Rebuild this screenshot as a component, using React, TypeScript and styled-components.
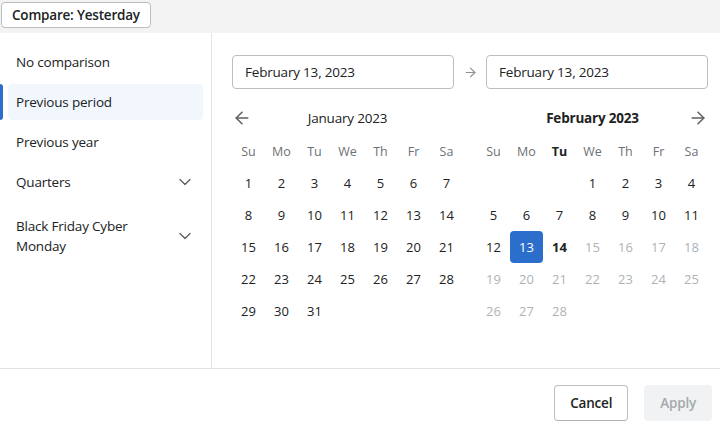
import React from 'react'
import styled, { createGlobalStyle } from 'styled-components'
import { ArrowLeft, ArrowRight, ChevronDown } from 'lucide-react'

const variables = {
    text: '#202223',
    subdued: '#6d7175',
    disabled: '#b0b3b6',
    border: '#babfc3',
    divider: '#e1e3e5',
    blue: '#2c6ecb',
    icon: '#5c5f62'
};

const GlobalStyle = createGlobalStyle`
  body {
    margin: 0;
    background: #fff;
    font-family: "Open Sans", "Noto Sans", sans-serif;
    color: ${variables.text};
  }
`;

const TopBar = styled.div`
  height: 33px;
  background: #f3f3f3;
  padding: 2px 1px 0;
  box-sizing: border-box;
`;
const CompareButton = styled.button`
  height: 26px;
  padding: 0 10px;
  background: #fff;
  border: 1px solid ${variables.border};
  border-radius: 4px;
  font-family: inherit;
  font-size: 13.5px;
  font-weight: 600;
  color: ${variables.text};
  letter-spacing: -0.2px;
`;
const Body = styled.div`
  display: flex;
  height: 335px;
`;
const Sidebar = styled.div`
  width: 212px;
  flex-shrink: 0;
  border-right: 1px solid ${variables.divider};
  padding: 11px 8px 0;
  box-sizing: border-box;
  display: flex;
  flex-direction: column;
  gap: 4px;
`;
const Option = styled.div<{ $active?: boolean; $offset?: number }>`
  position: relative;
  display: flex;
  align-items: center;
  justify-content: space-between;
  padding: 8px 8px;
  margin-top: ${p => p.$offset || 0}px;
  border-radius: 4px;
  font-size: 13.5px;
  line-height: 20px;
  letter-spacing: -0.2px;
  background: ${p => (p.$active ? '#f2f7fe' : 'transparent')};
  &::before {
    content: '';
    display: ${p => (p.$active ? 'block' : 'none')};
    position: absolute;
    left: -8px;
    top: 0;
    bottom: 0;
    width: 3px;
    background: ${variables.blue};
    border-radius: 0 3px 3px 0;
  }
  svg {
    color: ${variables.icon};
    flex-shrink: 0;
  }
`;
const OptionLabel = styled.span`
  max-width: 130px;
`;
const Main = styled.div`
  flex: 1;
  padding: 22px 12px 0 20px;
`;
const InputsRow = styled.div`
  display: flex;
  align-items: center;
`;
const DateInput = styled.div`
  width: 222px;
  height: 34px;
  box-sizing: border-box;
  border: 1px solid ${variables.border};
  border-radius: 4px;
  padding: 0 12px;
  display: flex;
  align-items: center;
  font-size: 13.5px;
  letter-spacing: -0.2px;
`;
const InputArrow = styled.div`
  width: 32px;
  display: flex;
  justify-content: center;
  color: #8c9196;
`;
const Calendars = styled.div`
  display: flex;
  gap: 14px;
  margin-top: 14px;
`;
const Month = styled.div`
  width: 231px;
`;
const MonthHeader = styled.div`
  display: grid;
  grid-template-columns: 24px 1fr 24px;
  align-items: center;
  height: 30px;
  margin-bottom: 2px;
  svg {
    display: block;
    color: ${variables.icon};
  }
`;
const NavSlot = styled.div<{ $end?: boolean }>`
  display: flex;
  justify-content: ${p => (p.$end ? 'flex-end' : 'flex-start')};
`;
const MonthTitle = styled.div<{ $bold?: boolean }>`
  text-align: center;
  font-size: 13.5px;
  letter-spacing: -0.2px;
  font-weight: ${p => (p.$bold ? 700 : 400)};
`;
const Grid = styled.div`
  display: grid;
  grid-template-columns: repeat(7, 33px);
  grid-auto-rows: 32px;
`;
const WeekDay = styled.div<{ $bold?: boolean }>`
  display: flex;
  align-items: center;
  justify-content: center;
  font-size: 12.5px;
  color: ${p => (p.$bold ? variables.text : variables.subdued)};
  font-weight: ${p => (p.$bold ? 700 : 400)};
`;
const Day = styled.div<{ $state?: 'normal' | 'selected' | 'today' | 'disabled' }>`
  display: flex;
  align-items: center;
  justify-content: center;
  font-size: 13px;
  border-radius: 4px;
  color: ${p =>
        p.$state === 'selected' ? '#fff' : p.$state === 'disabled' ? variables.disabled : variables.text};
  background: ${p => (p.$state === 'selected' ? variables.blue : 'transparent')};
  font-weight: ${p => (p.$state === 'today' ? 700 : 400)};
`;
const Footer = styled.div`
  border-top: 1px solid ${variables.divider};
  display: flex;
  justify-content: flex-end;
  gap: 16px;
  padding: 16px 8px 0;
`;
const FooterButton = styled.button<{ $disabled?: boolean }>`
  height: 36px;
  padding: 0 15px;
  border-radius: 4px;
  font-family: inherit;
  font-size: 13.5px;
  font-weight: 600;
  letter-spacing: -0.2px;
  border: 1px solid ${p => (p.$disabled ? '#f1f2f3' : variables.border)};
  border-bottom-color: ${p => (p.$disabled ? '#f1f2f3' : '#aeb4b9')};
  background: ${p => (p.$disabled ? '#f1f2f3' : '#fff')};
  color: ${p => (p.$disabled ? '#a5a8ab' : variables.text)};
`;

const weekDays = ['Su', 'Mo', 'Tu', 'We', 'Th', 'Fr', 'Sa'];

interface IMonthProps {
    title: string;
    offset: number;
    days: number;
    side: 'left' | 'right';
    current?: boolean;
}

const MonthView: React.FC<IMonthProps> = props => {
    const {title, offset, days, side, current} = props;
    const cells = [];
    for (let i = 0; i < offset; i++) cells.push(<div key={'e' + i} />);
    for (let d = 1; d <= days; d++) {
        let state: 'normal' | 'selected' | 'today' | 'disabled' = 'normal';
        if (current) {
            if (d === 13) state = 'selected';
            else if (d === 14) state = 'today';
            else if (d > 14) state = 'disabled';
        }
        cells.push(<Day key={d} $state={state}>{d}</Day>);
    }

    return (
        <Month>
            <MonthHeader>
                <NavSlot>{side === 'left' && <ArrowLeft size={20} strokeWidth={1.8} />}</NavSlot>
                <MonthTitle $bold={current}>{title}</MonthTitle>
                <NavSlot $end>{side === 'right' && <ArrowRight size={20} strokeWidth={1.8} />}</NavSlot>
            </MonthHeader>
            <Grid>
                {weekDays.map(w => (
                    <WeekDay key={w} $bold={current && w === 'Tu'}>{w}</WeekDay>
                ))}
                {cells}
            </Grid>
        </Month>
    )
};

const App: React.FC = () => {
    return (
        <>
            <GlobalStyle />
            <TopBar>
                <CompareButton>Compare: Yesterday</CompareButton>
            </TopBar>
            <Body>
                <Sidebar>
                    <Option>No comparison</Option>
                    <Option $active>Previous period</Option>
                    <Option>Previous year</Option>
                    <Option>
                        <OptionLabel>Quarters</OptionLabel>
                        <ChevronDown size={20} strokeWidth={1.6} />
                    </Option>
                    <Option $offset={4}>
                        <OptionLabel>Black Friday Cyber Monday</OptionLabel>
                        <ChevronDown size={20} strokeWidth={1.6} />
                    </Option>
                </Sidebar>
                <Main>
                    <InputsRow>
                        <DateInput>February 13, 2023</DateInput>
                        <InputArrow>
                            <ArrowRight size={15} strokeWidth={1.8} />
                        </InputArrow>
                        <DateInput>February 13, 2023</DateInput>
                    </InputsRow>
                    <Calendars>
                        <MonthView title="January 2023" offset={0} days={31} side="left" />
                        <MonthView title="February 2023" offset={3} days={28} side="right" current />
                    </Calendars>
                </Main>
            </Body>
            <Footer>
                <FooterButton>Cancel</FooterButton>
                <FooterButton $disabled>Apply</FooterButton>
            </Footer>
        </>
    )
};

export default App
